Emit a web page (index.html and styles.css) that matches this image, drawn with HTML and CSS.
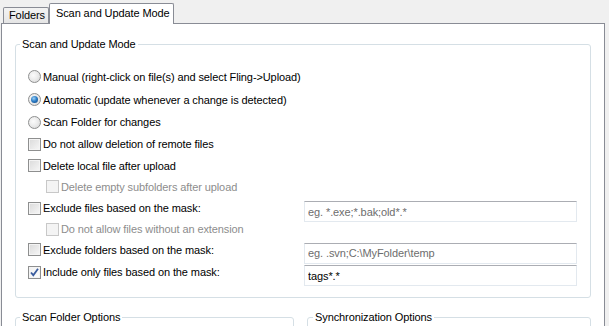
FILE: index.html
```html
<!DOCTYPE html>
<html>
<head>
<meta charset="utf-8">
<link rel="stylesheet" href="styles.css">
</head>
<body>
<div class="window">
  <div class="tabs">
    <div class="tab">Folders</div>
    <div class="tab active">Scan and Update Mode</div>
  </div>
  <div class="panel">
    <fieldset class="group main">
      <legend>Scan and Update Mode</legend>
      <div class="grid">
        <div class="opt"><span class="radio"></span>Manual (right-click on file(s) and select Fling-&gt;Upload)</div>
        <div class="opt"><span class="radio on"></span>Automatic (update whenever a change is detected)</div>
        <div class="opt"><span class="radio"></span>Scan Folder for changes</div>
        <div class="opt"><span class="check"></span>Do not allow deletion of remote files</div>
        <div class="opt"><span class="check"></span>Delete local file after upload</div>
        <div class="opt sub disabled"><span class="check"></span>Delete empty subfolders after upload</div>
        <div class="opt"><span class="check"></span>Exclude files based on the mask:</div>
        <input class="field" type="text" placeholder="eg. *.exe;*.bak;old*.*">
        <div class="opt sub disabled"><span class="check"></span>Do not allow files without an extension</div>
        <div class="opt"><span class="check"></span>Exclude folders based on the mask:</div>
        <input class="field" type="text" placeholder="eg. .svn;C:\MyFolder\temp">
        <div class="opt"><span class="check on"><svg width="11" height="11" viewBox="0 0 11 11"><path d="M2 5.5 L4.3 8.2 L9 1.8" fill="none" stroke="#3a5c9e" stroke-width="1.8"/></svg></span>Include only files based on the mask:</div>
        <input class="field" type="text" value="tags*.*">
      </div>
    </fieldset>
    <div class="bottom">
      <fieldset class="group left"><legend>Scan Folder Options</legend></fieldset>
      <fieldset class="group right"><legend>Synchronization Options</legend></fieldset>
    </div>
  </div>
</div>
</body>
</html>
```

FILE: styles.css
```css
html, body {
  margin: 0;
  padding: 0;
  background: #f0f0f0;
  font-family: "Liberation Sans", Arial, sans-serif;
  font-size: 11px;
  letter-spacing: -0.1px;
  color: #000;
  overflow: hidden;
}

.window {
  width: 609px;
  height: 326px;
  overflow: hidden;
}

.tabs {
  display: flex;
  align-items: flex-end;
  height: 23px;
  padding-left: 3px;
}

.tab {
  box-sizing: border-box;
  height: 16px;
  padding: 0 3px 0 5px;
  border: 1px solid #898c95;
  border-bottom: none;
  background: linear-gradient(#f3f3f3, #e5e5e5);
  line-height: 15px;
  border-radius: 2px 2px 0 0;
}

.tab.active {
  position: relative;
  z-index: 1;
  height: 21px;
  margin-bottom: -1px;
  padding: 0 3px 0 6px;
  background: #fff;
  line-height: 18px;
}

.panel {
  box-sizing: border-box;
  width: 604px;
  height: 320px;
  margin-left: 1px;
  border: 1px solid #898c95;
  background: #fff;
  padding: 14px 13px 0 13px;
}

.group {
  margin: 0;
  padding: 0;
  min-width: 0;
  border: 1px solid #d5dfe5;
  border-radius: 3px;
}

.group legend {
  padding: 0 2px;
  margin-left: 4px;
  line-height: 13px;
}

.main .grid {
  display: grid;
  grid-template-columns: 276px 273px;
  grid-template-rows: 23px 23px 22px 22px 21px 21px 22px 20px 21px 24px;
  padding: 14px 0 13px 12px;
}

.opt {
  grid-column: 1;
  display: flex;
  align-items: center;
  white-space: nowrap;
}

.opt.sub {
  padding-left: 18px;
}

.opt.disabled {
  color: #8d8d8d;
}

.radio {
  box-sizing: border-box;
  width: 13px;
  height: 13px;
  margin-right: 2px;
  border-radius: 50%;
  border: 1px solid #8e8f8f;
  background: radial-gradient(circle at 40% 40%, #fbfbfb 0, #ececec 45%, #d4d4d4 100%);
  display: flex;
  align-items: center;
  justify-content: center;
}

.radio.on::after {
  content: "";
  width: 7px;
  height: 7px;
  border-radius: 50%;
  background: radial-gradient(circle at 40% 35%, #9fd2f7 0, #2d7fc8 45%, #0d3f7a 100%);
}

.check {
  box-sizing: border-box;
  width: 13px;
  height: 13px;
  margin-right: 2px;
  border: 1px solid #8e8f8f;
  background: linear-gradient(135deg, #dadada, #f7f7f7);
  box-shadow: inset 0 0 0 1px #f4f4f4;
  display: flex;
  align-items: center;
  justify-content: center;
}

.check.on {
  background: linear-gradient(135deg, #f0f0f0, #fdfdfd);
}

.disabled .check {
  border-color: #c8c8c8;
  background: #f4f4f4;
  box-shadow: none;
}

.field {
  grid-column: 2;
  box-sizing: border-box;
  width: 273px;
  height: 21px;
  margin: 7px 0 0 0;
  align-self: center;
  padding: 0 0 0 3px;
  border: 1px solid #e3e9ef;
  border-top-color: #abadb3;
  font-family: "Liberation Sans", Arial, sans-serif;
  font-size: 11px;
  letter-spacing: -0.1px;
  color: #000;
  background: #fff;
  outline: none;
}

.field::placeholder {
  color: #6d6d6d;
}

.bottom {
  display: flex;
  gap: 13px;
  margin-top: 13px;
}

.bottom .left {
  width: 279px;
  height: 40px;
}

.bottom .right {
  width: 284px;
  height: 40px;
}

.bottom .right legend {
  margin-left: 5px;
}
```
